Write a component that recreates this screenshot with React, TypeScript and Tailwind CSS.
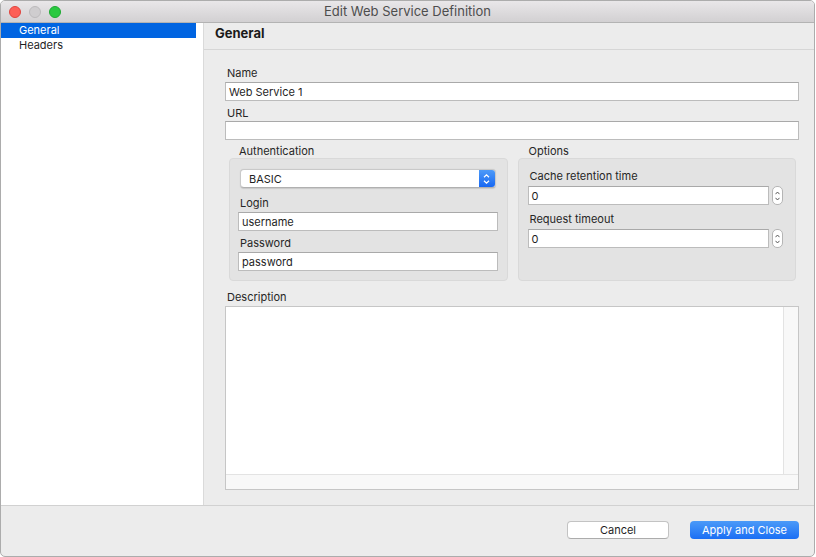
const Label = ({ children, className = "" }: { children: React.ReactNode; className?: string }) => (
  <div className={`h-[14px] leading-[14px] pl-[2px] text-[#262626] ${className}`}>{children}</div>
);

const TextInput = ({ value = "", className = "" }: { value?: string; className?: string }) => (
  <div
    className={`h-[19px] bg-white border border-[#bcbcbc] border-t-[#a9a9a9] pl-[3px] leading-[18px] text-[#1f1f1f] ${className}`}
  >
    {value}
  </div>
);

function Stepper() {
  return (
    <div className="w-[11px] h-[19px] shrink-0 rounded-[5px] bg-white border border-[#b5b5b5] flex flex-col items-center justify-center gap-[2px]">
      <svg width="5" height="4" viewBox="0 0 5 4">
        <path d="M0.5 3.2 L2.5 1 L4.5 3.2" fill="none" stroke="#4a4a4a" strokeWidth="0.9" />
      </svg>
      <svg width="5" height="4" viewBox="0 0 5 4">
        <path d="M0.5 0.8 L2.5 3 L4.5 0.8" fill="none" stroke="#4a4a4a" strokeWidth="0.9" />
      </svg>
    </div>
  );
}

function SelectBox({ value }: { value: string }) {
  return (
    <div className="mx-[2px] h-[19px] flex rounded-[4px] bg-white border border-[#c9c9c9] border-b-[#b0b0b0] shadow-[0_0.5px_1px_rgba(0,0,0,0.12)] overflow-hidden">
      <div className="flex-1 pl-[8px] leading-[18px] text-[#1f1f1f]">{value}</div>
      <div className="w-[16px] bg-gradient-to-b from-[#4d9af8] to-[#1767f2] flex flex-col items-center justify-center gap-[2px]">
        <svg width="7" height="4" viewBox="0 0 7 4">
          <path d="M1 3.3 L3.5 0.9 L6 3.3" fill="none" stroke="white" strokeWidth="1.2" />
        </svg>
        <svg width="7" height="4" viewBox="0 0 7 4">
          <path d="M1 0.7 L3.5 3.1 L6 0.7" fill="none" stroke="white" strokeWidth="1.2" />
        </svg>
      </div>
    </div>
  );
}

export default function App() {
  return (
    <div className="w-[816px] h-[557px] bg-white font-['Inter',sans-serif] text-[11px] text-[#242424]">
      <div className="w-[815px] h-[557px] rounded-[5px] border border-[#acacac] overflow-hidden flex flex-col bg-[#ececec]">
        {/* Title bar */}
        <div className="relative h-[22px] shrink-0 bg-gradient-to-b from-[#e9e7e9] to-[#d2d0d2] border-b border-[#b3b3b3] flex items-center">
          <div className="flex items-center gap-[8px] pl-[8px]">
            <div className="w-[12px] h-[12px] rounded-full bg-[#fd5f57] border border-[#e0443e]" />
            <div className="w-[12px] h-[12px] rounded-full bg-[#cfcdcf] border border-[#bcbabc]" />
            <div className="w-[12px] h-[12px] rounded-full bg-[#2ac941] border border-[#1ea933]" />
          </div>
          <div className="absolute inset-0 flex items-center justify-center text-[13px] text-[#4d4d4d] pointer-events-none">
            Edit Web Service Definition
          </div>
        </div>

        {/* Body */}
        <div className="flex flex-1 min-h-0">
          {/* Sidebar */}
          <div className="w-[203px] shrink-0 bg-white border-r border-[#dadada]">
            <div className="w-[195px] h-[15px] leading-[15px] bg-[#0064e1] text-white pl-[18px]">General</div>
            <div className="h-[15px] leading-[15px] pl-[18px] text-[#1f1f1f]">Headers</div>
          </div>

          {/* Main panel */}
          <div className="flex-1 flex flex-col min-w-0">
            <div className="h-[27px] shrink-0 border-b border-[#d6d6d6] pl-[11px] pt-[2px] text-[13px] font-bold leading-[16px] text-[#1a1a1a]">
              General
            </div>

            <div className="pl-[21px] pr-[15px] pt-[16px]">
              <Label>Name</Label>
              <TextInput value="Web Service 1" className="mt-[2px]" />
              <Label className="mt-[5px]">URL</Label>
              <TextInput className="mt-[1px]" />

              <div className="grid grid-cols-2 gap-[10px] ml-[4px] mr-[3px] mt-[4px]">
                {/* Authentication */}
                <div className="flex flex-col">
                  <div className="h-[14px] leading-[14px] pl-[10px] text-[#262626]">Authentication</div>
                  <div className="h-[123px] rounded-[4px] bg-[#e3e3e3] border border-[#d9d9d9] pt-[10px] pl-[8px] pr-[9px]">
                    <SelectBox value="BASIC" />
                    <Label className="mt-[8px]">Login</Label>
                    <TextInput value="username" className="mt-[2px]" />
                    <Label className="mt-[5px]">Password</Label>
                    <TextInput value="password" className="mt-[2px]" />
                  </div>
                </div>

                {/* Options */}
                <div className="flex flex-col">
                  <div className="h-[14px] leading-[14px] pl-[11px] text-[#262626]">Options</div>
                  <div className="h-[123px] rounded-[4px] bg-[#e3e3e3] border border-[#d9d9d9] pt-[10px] pl-[9px] pr-[12px]">
                    <Label>Cache retention time</Label>
                    <div className="flex items-center gap-[3px] mt-[3px]">
                      <TextInput value="0" className="flex-1" />
                      <Stepper />
                    </div>
                    <Label className="mt-[7px]">Request timeout</Label>
                    <div className="flex items-center gap-[3px] mt-[3px]">
                      <TextInput value="0" className="flex-1" />
                      <Stepper />
                    </div>
                  </div>
                </div>
              </div>

              <Label className="mt-[9px]">Description</Label>
              <div className="mt-[2px] h-[184px] border border-[#c6c6c6] bg-white flex flex-col">
                <div className="flex flex-1 min-h-0">
                  <div className="flex-1 bg-white" />
                  <div className="w-[15px] bg-[#f8f8f8] border-l border-[#e3e3e3]" />
                </div>
                <div className="h-[15px] bg-[#f8f8f8] border-t border-[#e3e3e3]" />
              </div>
            </div>
          </div>
        </div>

        {/* Footer */}
        <div className="h-[51px] shrink-0 border-t border-[#d1d1d1] flex justify-end items-start pt-[15px] pr-[15px] gap-[21px]">
          <div className="w-[102px] h-[18px] rounded-[4px] bg-white border border-[#c3c3c3] border-b-[#acacac] flex items-center justify-center text-[#1f1f1f]">
            Cancel
          </div>
          <div className="w-[109px] h-[18px] rounded-[4px] bg-gradient-to-b from-[#4b9af8] to-[#1a6ef4] flex items-center justify-center text-white">
            Apply and Close
          </div>
        </div>
      </div>
    </div>
  );
}
